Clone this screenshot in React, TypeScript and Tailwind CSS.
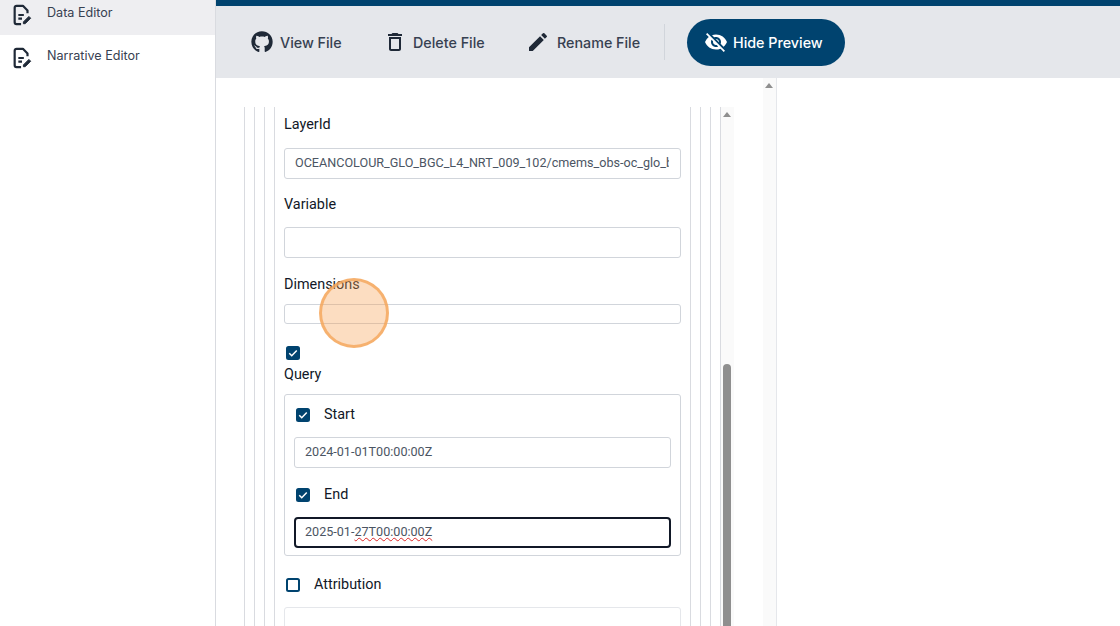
import React from "react";
import { MdDeleteOutline, MdEdit, MdVisibilityOff } from "react-icons/md";
import { FaGithub } from "react-icons/fa";

const DocIcon = () => (
  <svg width="22" height="22" viewBox="0 0 24 24" fill="none" stroke="#1f2937" strokeWidth="2.4" className="translate-y-[1px]">
    <path d="M18 10V7l-5-5H6a2 2 0 0 0-2 2v16a2 2 0 0 0 2 2h5" strokeLinejoin="round" />
    <path d="M8 12h6M8 16h4" />
    <path d="M13.5 21.5v-2l6-6 2 2-6 6h-2z" fill="#1f2937" strokeWidth="1" />
  </svg>
);

const Check = ({ on }: { on: boolean }) => (
  <div className={`w-[14px] h-[14px] rounded-[2.5px] border-2 border-[#00436f] flex items-center justify-center shrink-0 ${on ? "bg-[#00436f]" : "bg-white"}`}>
    {on && (
      <svg width="12" height="12" viewBox="0 0 12 12" fill="none" stroke="#fff" strokeWidth="1.8">
        <path d="M1.5 6.2 4.5 9.2 10.5 3" />
      </svg>
    )}
  </div>
);

const TBtn = ({ icon, label, cls }: { icon: React.ReactNode; label: string; cls: string }) => (
  <div className={`flex items-center text-[#374151] text-[14.3px] font-medium ${cls}`}>
    {icon}
    <span className="translate-y-[1px]">{label}</span>
  </div>
);

const Field = ({ children, h = "h-[31px]", cls = "" }: { children?: React.ReactNode; h?: string; cls?: string }) => (
  <div className={`${h} ${cls} bg-white border border-[#d1d5db] rounded-[3px] pl-[10px] pr-[11px] flex items-center text-[12.6px] text-[#4b5563] overflow-hidden whitespace-nowrap`}>
    {children}
  </div>
);

export default function App() {
  return (
    <div className="w-[1120px] h-[626px] overflow-hidden flex bg-white font-['Roboto',sans-serif] relative">
      <aside className="w-[216px] shrink-0 border-r border-[#d9dbe0] font-['Inter',sans-serif] text-[12.6px] text-[#374151]">
        <div className="h-[43px] -mt-[8px] bg-[#eeeef1] flex items-center pl-[11px] gap-[14px]">
          <DocIcon />
          <span>Data Editor</span>
        </div>
        <div className="h-[43px] flex items-center pl-[11px] gap-[14px]">
          <DocIcon />
          <span>Narrative Editor</span>
        </div>
      </aside>
      <main className="flex-1 flex flex-col min-w-0">
        <div className="h-[6px] bg-[#00436f] shrink-0" />
        <div className="h-[72px] bg-[#e5e7eb] shrink-0 flex items-center pl-[35px] font-['Inter',sans-serif]">
          <TBtn cls="w-[132px] gap-[7px]" icon={<FaGithub size={22} className="text-[#1f2937]" />} label="View File" />
          <TBtn cls="w-[143px] gap-[6px]" icon={<MdDeleteOutline size={24} className="text-[#1f2937]" />} label="Delete File" />
          <TBtn cls="w-[138px] gap-[7px]" icon={<MdEdit size={24} className="text-[#1f2937]" />} label="Rename File" />
          <div className="w-px h-[36px] bg-[#d1d5db] mr-[22px]" />
          <div className="w-[158px] h-[47px] rounded-full bg-[#00436f] text-white flex items-center pl-[17px] gap-[5px] text-[14.3px] font-medium">
            <MdVisibilityOff size={24} />
            <span className="translate-y-[1px]">Hide Preview</span>
          </div>
        </div>
        <div className="flex-1 min-h-0 flex">
          <div className="w-[561px] border-r border-[#e5e7eb] flex overflow-hidden">
            <div className="w-[547px] pt-[29px] pl-[28px] flex">
              <div className="w-[477px] h-[600px] border-x border-[#d9dbe0] px-[9px]">
                <div className="h-full border-x border-[#d9dbe0] px-[9px]">
                  <div className="h-full border-x border-[#d9dbe0] px-[9px] text-[14.4px] text-[#111827]">
                    <div className="h-full border-x border-[#d9dbe0] px-[9px]">
                      <div className="pt-[8px] leading-[20px]">LayerId</div>
                      <Field cls="mt-[13px]"><span className="overflow-hidden">OCEANCOLOUR_GLO_BGC_L4_NRT_009_102/cmems_obs-oc_glo_bgc-plankton_nrt_l4-gapfree</span></Field>
                      <div className="mt-[16px] leading-[20px]">Variable</div>
                      <Field cls="mt-[12px]" />
                      <div className="mt-[17px] leading-[20px]">Dimensions</div>
                      <Field cls="mt-[9px]" h="h-[20px]" />
                      <div className="mt-[22px] pl-[2px]"><Check on /></div>
                      <div className="mt-[5px] leading-[20px]">Query</div>
                      <div className="mt-[9px] h-[162px] border border-[#d1d5db] rounded-[3px] px-[9px] pt-[12px]">
                        <div className="flex items-center gap-[14px] pl-[2px] h-[16px]"><Check on /><span>Start</span></div>
                        <Field cls="mt-[14px]">2024-01-01T00:00:00Z</Field>
                        <div className="mt-[19px] flex items-center gap-[14px] pl-[2px] h-[16px]"><Check on /><span>End</span></div>
                        <div className="mt-[14px] h-[31px] border-2 border-[#111827] rounded-[4px] pl-[9px] flex items-center text-[12.6px] text-[#4b5563]">
                          <span>2025-01-<span className="underline decoration-wavy decoration-[#dc2626] decoration-1">27T00:00:00Z</span></span>
                        </div>
                      </div>
                      <div className="mt-[21px] flex items-center gap-[14px] pl-[2px] h-[16px]"><Check on={false} /><span>Attribution</span></div>
                      <div className="mt-[14px] h-[40px] border border-[#e5e7eb] rounded-[3px]" />
                    </div>
                  </div>
                </div>
              </div>
              <div className="w-[13px] h-[519px] pr-[1px] bg-[#fafafa] flex flex-col items-center shrink-0">
                <div className="mt-[5px] w-0 h-0 border-x-[4px] border-x-transparent border-b-[5px] border-b-[#8f8f8f]" />
                <div className="mt-[247px] w-[8px] flex-1 bg-[#8f8f8f] rounded-t-[4px] min-h-[200px]" />
              </div>
            </div>
            <div className="w-[13px] pr-[1px] bg-[#fafafa] flex flex-col items-center shrink-0">
              <div className="mt-[5px] w-0 h-0 border-x-[4px] border-x-transparent border-b-[5px] border-b-[#8f8f8f]" />
            </div>
          </div>
          <div className="flex-1" />
        </div>
      </main>
      <div className="absolute left-[319px] top-[278px] w-[70px] h-[70px] rounded-full bg-[#f59e4c]/35 border-[3px] border-[#f5a65b]/80" />
    </div>
  );
}
